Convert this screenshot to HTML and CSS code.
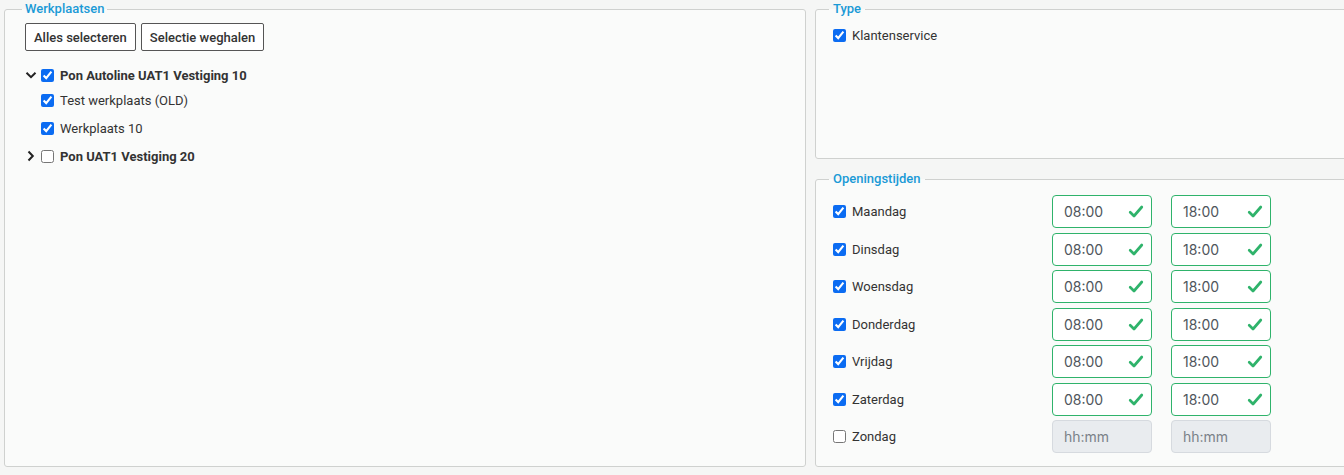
FILE: index.html
```html
<!DOCTYPE html>
<html lang="nl">
<head>
  <meta charset="UTF-8" />
  <meta name="viewport" content="width=device-width, initial-scale=1.0" />
  <title>Werkplaatsen en openingstijden</title>
  <link rel="stylesheet" href="styles.css">
</head>
<body>
  <div class="layout">
    <!-- Werkplaatsen: boom met vestigingen -->
    <fieldset class="box box-left">
      <legend>Werkplaatsen</legend>
      <div class="inner">
        <div class="actions">
          <button type="button">Alles selecteren</button>
          <button type="button">Selectie weghalen</button>
        </div>

        <ul class="tree">
          <li class="node open">
            <label class="row parent first">
              <span class="toggle">
                <svg width="12" height="12" viewBox="0 0 12 12"><path d="M1.5 3.8 6 8.2 10.5 3.8" fill="none" stroke="#222" stroke-width="2"/></svg>
              </span>
              <input type="checkbox" checked>
              <span>Pon Autoline UAT1 Vestiging 10</span>
            </label>
            <ul class="children">
              <li><label class="row"><input type="checkbox" checked><span>Test werkplaats (OLD)</span></label></li>
              <li><label class="row"><input type="checkbox" checked><span>Werkplaats 10</span></label></li>
            </ul>
          </li>
          <li class="node">
            <label class="row parent">
              <span class="toggle">
                <svg width="12" height="12" viewBox="0 0 12 12"><path d="M3.5 1.5 7.8 6 3.5 10.5" fill="none" stroke="#222" stroke-width="2"/></svg>
              </span>
              <input type="checkbox">
              <span>Pon UAT1 Vestiging 20</span>
            </label>
          </li>
        </ul>
      </div>
    </fieldset>

    <div class="side">
      <fieldset class="box box-type">
        <legend>Type</legend>
        <label class="row type-row"><input type="checkbox" checked><span>Klantenservice</span></label>
      </fieldset>

      <fieldset class="box box-hours">
        <legend>Openingstijden</legend>
        <div class="hours" id="hours"></div>
      </fieldset>
    </div>
  </div>

  <script>
    // dagen met open- en sluittijd, leeg = gesloten
    const days = [
      ['Maandag', '08:00', '18:00'],
      ['Dinsdag', '08:00', '18:00'],
      ['Woensdag', '08:00', '18:00'],
      ['Donderdag', '08:00', '18:00'],
      ['Vrijdag', '08:00', '18:00'],
      ['Zaterdag', '08:00', '18:00'],
      ['Zondag', '', '']
    ];

    const check = '<svg class="valid" width="16" height="15" viewBox="0 0 16 15"><path d="M2.2 8.2 6 12 13.8 3" fill="none" stroke="#2fb36b" stroke-width="2.7" stroke-linecap="round" stroke-linejoin="round"/></svg>';

    function timeField(value) {
      if (!value) {
        return `<div class="time"><input type="text" placeholder="hh:mm" disabled></div>`;
      }
      return `<div class="time ok"><input type="text" value="${value}">${check}</div>`;
    }

    const hours = document.getElementById('hours');
    days.forEach(([name, from, to]) => {
      hours.insertAdjacentHTML('beforeend', `
        <label class="row day"><input type="checkbox" ${from ? 'checked' : ''}><span>${name}</span></label>
        ${timeField(from)}
        ${timeField(to)}
      `);
    });
  </script>
</body>
</html>
```

FILE: styles.css
```css
html {
  overflow: hidden;
}
body {
  margin: 0;
  padding: 1px 0 0 4px;
  background: #f5f6f5;
  font-family: Roboto, "Liberation Sans", sans-serif;
  font-size: 13px;
  color: #333;
}
.layout {
  display: grid;
  grid-template-columns: 802px 802px;
  column-gap: 9px;
  height: 466px;
}
.box {
  margin: 0;
  border: 1px solid #cfd1cf;
  border-radius: 3px;
  background: #fafbfa;
  min-width: 0;
}
.box legend {
  color: #1a9ad6;
  font-weight: 500;
  font-size: 13px;
  line-height: 16px;
  padding: 0 4px;
}
.box-left {
  padding: 0 0 0 17px;
}
.box-left legend {
  padding: 0 3px;
}
.inner {
  padding: 6px 3px 0;
}
.actions {
  display: flex;
  gap: 5px;
}
.actions button {
  height: 28px;
  padding: 0 8px;
  font-family: inherit;
  font-size: 13px;
  font-weight: 500;
  color: #333;
  background: #fff;
  border: 1px solid #555;
  border-radius: 2px;
  cursor: pointer;
}
.tree, .children {
  list-style: none;
  margin: 0;
  padding: 0;
}
.tree {
  margin-top: 13px;
}
.row {
  display: flex;
  align-items: center;
  height: 28px;
}
.row input[type="checkbox"] {
  margin: 0 3px 0 4px;
  accent-color: #0b6cf2;
}
.row span:last-child {
  margin-left: 3px;
}
.parent {
  font-weight: 700;
}
.parent.first {
  height: 22px;
}
.toggle {
  width: 12px;
  height: 12px;
  display: flex;
}
.children .row {
  padding-left: 12px;
}
.side {
  display: flex;
  flex-direction: column;
  gap: 12px;
}
.box-type {
  height: 158px;
  box-sizing: border-box;
  padding: 6px 13px 0;
}
.type-row {
  height: 24px;
}
.box-hours {
  flex: 1;
  padding: 8px 13px 0;
}
.hours {
  display: grid;
  grid-template-columns: 204px 100px 100px;
  column-gap: 19px;
  row-gap: 4.5px;
}
.day {
  height: 33px;
}
.time {
  position: relative;
}
.time input {
  box-sizing: border-box;
  width: 100%;
  height: 33px;
  padding: 0 11px;
  font-family: Inter, "Liberation Sans", sans-serif;
  font-size: 14px;
  color: #4f565c;
  background: #fff;
  border: 1px solid #ced4da;
  border-radius: 4px;
  outline: none;
}
.time.ok input {
  border-color: #2fb36b;
}
.time input:disabled {
  background: #e9ecef;
  border-color: #d6dadf;
}
.time input::placeholder {
  color: #7a8188;
}
.valid {
  position: absolute;
  right: 8px;
  top: 9px;
}
```
